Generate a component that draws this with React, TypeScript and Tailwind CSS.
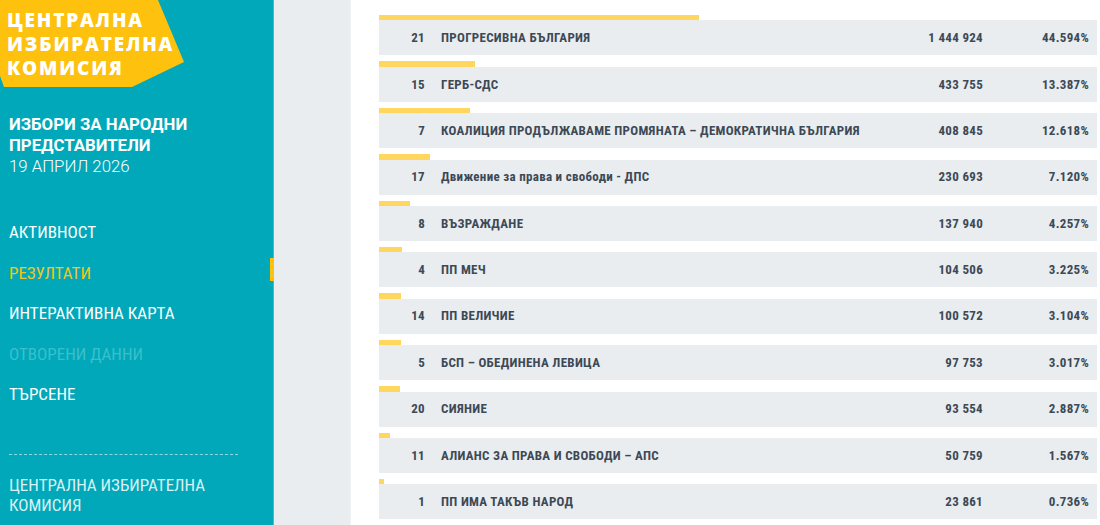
import React from "react";

const rows = [
  { n: "21", name: "ПРОГРЕСИВНА БЪЛГАРИЯ", votes: "1 444 924", pct: 44.594 },
  { n: "15", name: "ГЕРБ-СДС", votes: "433 755", pct: 13.387 },
  { n: "7", name: "КОАЛИЦИЯ ПРОДЪЛЖАВАМЕ ПРОМЯНАТА – ДЕМОКРАТИЧНА БЪЛГАРИЯ", votes: "408 845", pct: 12.618 },
  { n: "17", name: "Движение за права и свободи - ДПС", votes: "230 693", pct: 7.12 },
  { n: "8", name: "ВЪЗРАЖДАНЕ", votes: "137 940", pct: 4.257 },
  { n: "4", name: "ПП МЕЧ", votes: "104 506", pct: 3.225 },
  { n: "14", name: "ПП ВЕЛИЧИЕ", votes: "100 572", pct: 3.104 },
  { n: "5", name: "БСП – ОБЕДИНЕНА ЛЕВИЦА", votes: "97 753", pct: 3.017 },
  { n: "20", name: "СИЯНИЕ", votes: "93 554", pct: 2.887 },
  { n: "11", name: "АЛИАНС ЗА ПРАВА И СВОБОДИ – АПС", votes: "50 759", pct: 1.567 },
  { n: "1", name: "ПП ИМА ТАКЪВ НАРОД", votes: "23 861", pct: 0.736 },
];

const cond = { fontFamily: '"Roboto Condensed", Roboto, sans-serif' };

export default function App() {
  return (
    <div className="flex w-[1100px] h-[525px] overflow-hidden bg-white" style={cond}>
      <aside className="relative w-[274px] shrink-0 bg-[#00a8b9] border-r border-[#3fc0cc]">
        <div className="relative w-[184px] h-[87px]">
          <svg className="absolute inset-0" width="184" height="87" viewBox="0 0 184 87">
            <polygon points="0,0 158,0 184,62 132,87 4,87 0,76" fill="#fdc10e" />
          </svg>
          <div
            className="relative pl-[7px] pt-[8px] text-white font-extrabold text-[19px] leading-[24px] tracking-[1.8px]"
            style={{ fontFamily: '"Open Sans", "Noto Sans", sans-serif' }}
          >
            <div>ЦЕНТРАЛНА</div>
            <div>ИЗБИРАТЕЛНА</div>
            <div>КОМИСИЯ</div>
          </div>
        </div>
        <div
          className="pl-[9px] mt-[27px] text-white text-[16.8px] leading-[21px]"
          style={{ fontFamily: 'Roboto, sans-serif' }}
        >
          <div className="font-bold">ИЗБОРИ ЗА НАРОДНИ</div>
          <div className="font-bold">ПРЕДСТАВИТЕЛИ</div>
          <div className="font-light">19 АПРИЛ 2026</div>
        </div>
        <nav className="mt-[45px] pl-[9px] text-[17px] leading-[20px] flex flex-col gap-[20.5px]">
          <div className="text-white">АКТИВНОСТ</div>
          <div className="text-[#f3c51a]">РЕЗУЛТАТИ</div>
          <div className="text-white">ИНТЕРАКТИВНА КАРТА</div>
          <div className="text-[#3cbfcc]">ОТВОРЕНИ ДАННИ</div>
          <div className="text-white">ТЪРСЕНЕ</div>
        </nav>
        <div className="absolute right-[-1px] top-[258px] w-[4px] h-[23px] bg-[#fdc10e]" />
        <div className="mx-[9px] mt-[50px] w-[229px] border-t border-dashed border-[#8fd8df]" />
        <div className="pl-[9px] mt-[20px] text-[17px] leading-[20px] text-[#d9f1f3]">
          <div>ЦЕНТРАЛНА ИЗБИРАТЕЛНА</div>
          <div>КОМИСИЯ</div>
        </div>
      </aside>
      <div className="w-[77px] shrink-0 bg-[#e9edf0] border-r border-[#f2f2f2]" />
      <main className="flex-1 pl-[28px] pr-[3px] pt-[15px]">
        {rows.map((r) => (
          <div key={r.n} className="mb-[6px]">
            <div className="h-[5.4px] bg-[#ffd75e]" style={{ width: `${r.pct}%` }} />
            <div className="h-[35px] bg-[#e9edf0] flex items-center text-[13px] font-bold text-[#3d4955] tracking-[0.3px]">
              <div className="w-[46px] text-right">{r.n}</div>
              <div className="ml-[16px] flex-1">{r.name}</div>
              <div className="text-right">{r.votes}</div>
              <div className="w-[114px] pr-[8px] text-right">{r.pct.toFixed(3)}%</div>
            </div>
          </div>
        ))}
      </main>
    </div>
  );
}
